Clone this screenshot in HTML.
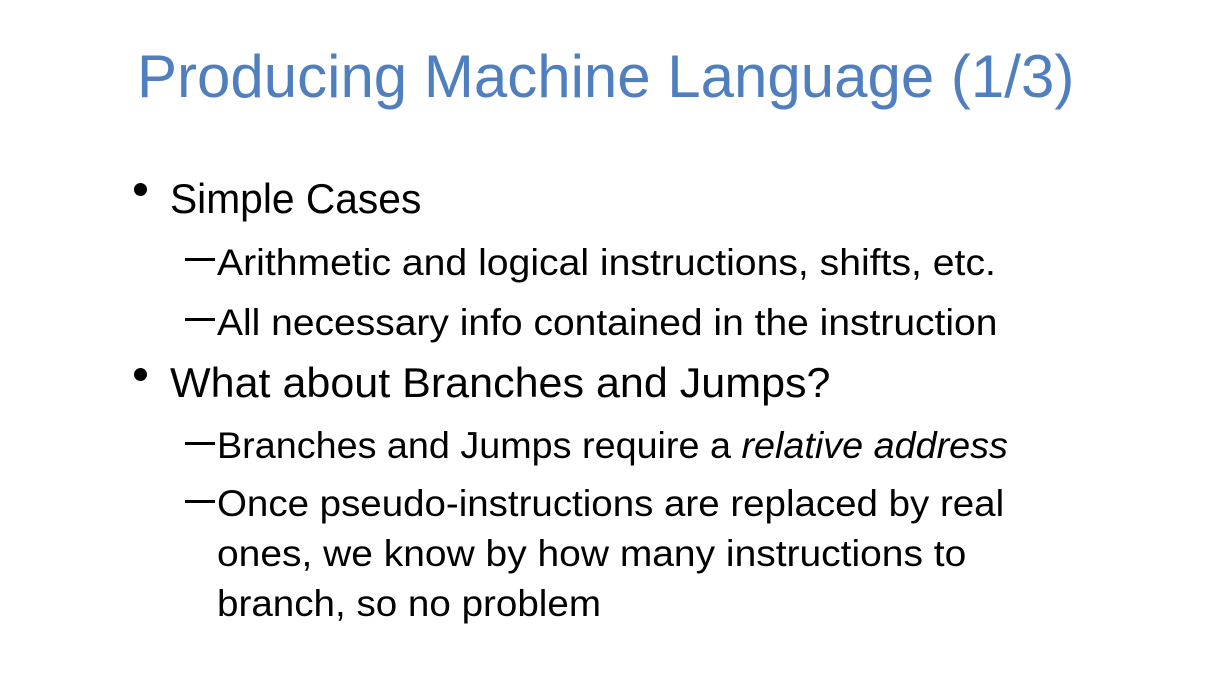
<html><head><style>
body{margin:0;width:1215px;height:675px;background:#fff;overflow:hidden;position:relative;font-family:"Liberation Sans",sans-serif}
.l{position:absolute;white-space:nowrap;line-height:1;transform-origin:0 0;color:#000}
.t{color:#4F7FBF;font-size:60px}
.b{font-size:42px}
.s{font-size:37px}
.dot{position:absolute;width:13px;height:13px;border-radius:50%;background:#000}
.d{position:absolute;width:30px;height:3px;background:#000}
</style></head><body>
<div class="l t" style="left:137px;top:47px">Producing Machine Language (1/3)</div>
<div class="dot" style="left:134px;top:183px"></div>
<div class="l b" style="left:170px;top:178px;transform:scaleX(0.97)">Simple Cases</div>
<div class="d" style="left:185px;top:258px"></div>
<div class="l s" style="left:217px;top:244px;transform:scaleX(1.058)">Arithmetic and logical instructions, shifts, etc.</div>
<div class="d" style="left:185px;top:318px"></div>
<div class="l s" style="left:217px;top:304px;transform:scaleX(1.054)">All necessary info contained in the instruction</div>
<div class="dot" style="left:134px;top:368px"></div>
<div class="l b" style="left:170px;top:362px;transform:scaleX(1.025)">What about Branches and Jumps?</div>
<div class="d" style="left:185px;top:442px"></div>
<div class="l s" style="left:217px;top:427px;transform:scaleX(1.02)">Branches and Jumps require a <i>relative address</i></div>
<div class="d" style="left:185px;top:500px"></div>
<div class="l s" style="left:217px;top:485px;transform:scaleX(1.04)">Once pseudo-instructions are replaced by real</div>
<div class="l s" style="left:217px;top:535px;transform:scaleX(1.053)">ones, we know by how many instructions to</div>
<div class="l s" style="left:217px;top:585px;transform:scaleX(1.043)">branch, so no problem</div>
</body></html>
